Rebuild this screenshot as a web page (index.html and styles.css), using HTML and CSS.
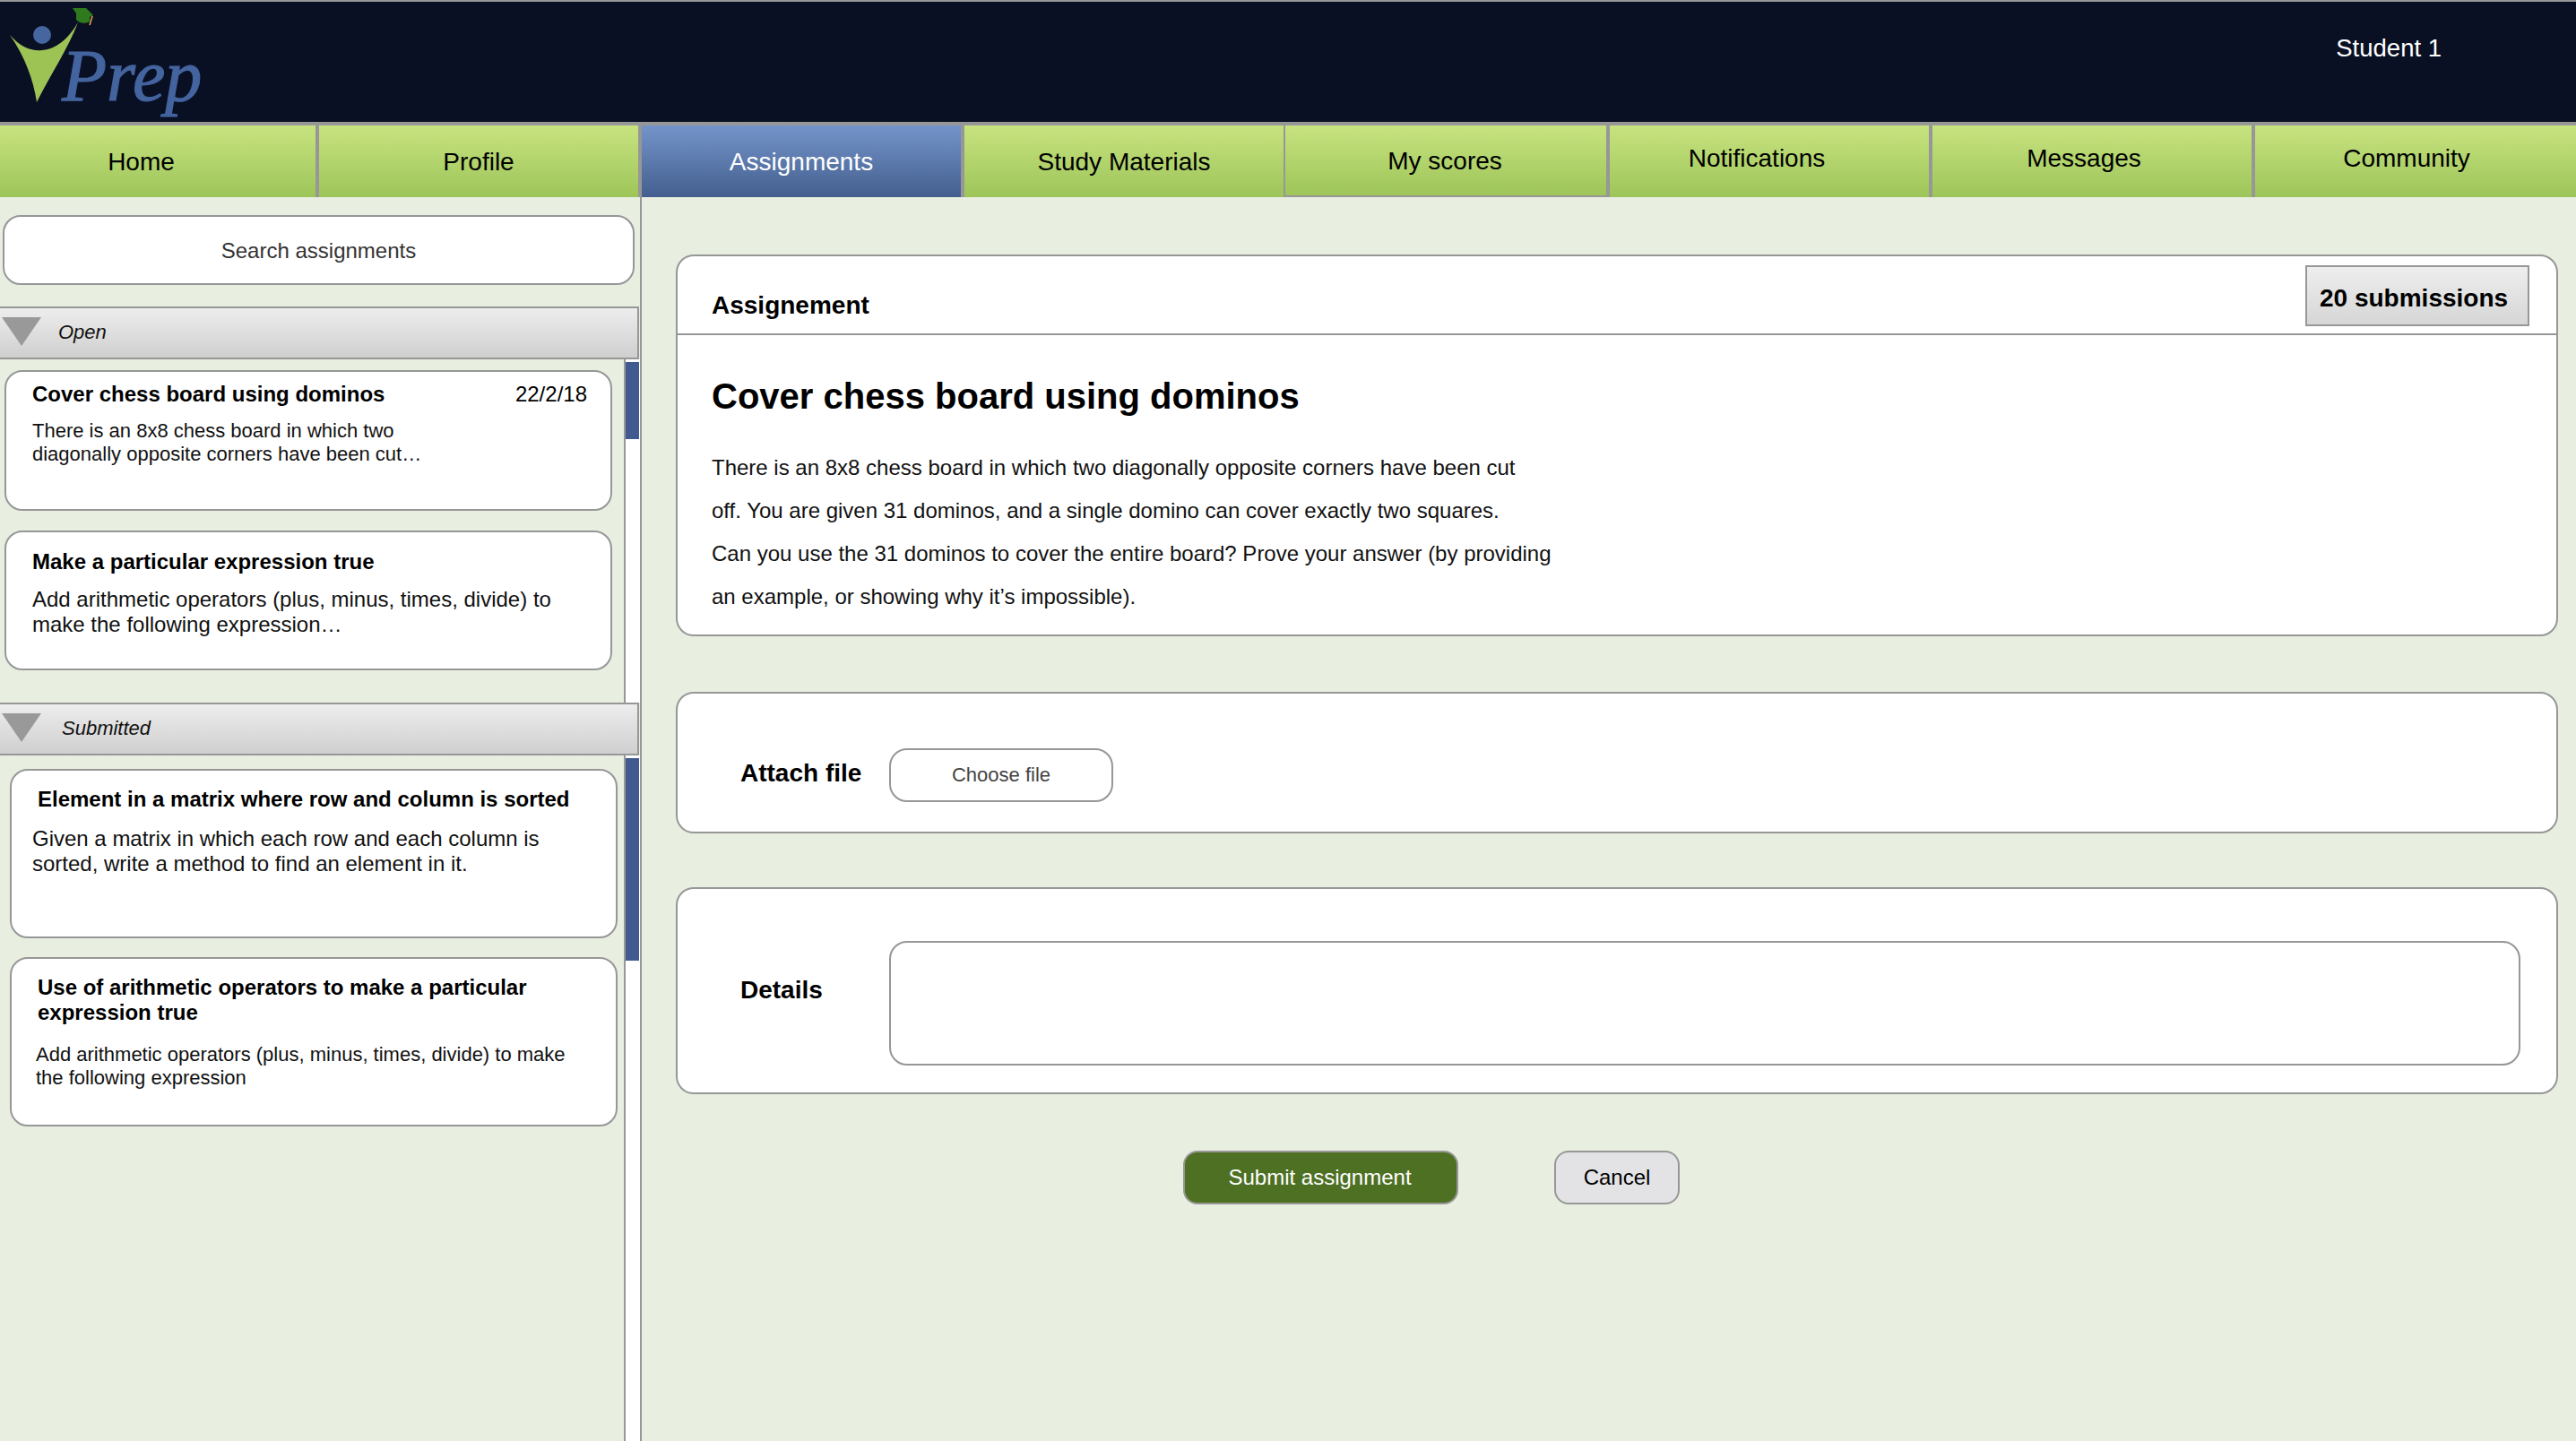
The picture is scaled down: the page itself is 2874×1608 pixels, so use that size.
FILE: index.html
```html
<!DOCTYPE html>
<html lang="en">
<head>
<meta charset="utf-8">
<title>Prep - Assignments</title>
<link rel="stylesheet" href="styles.css">
</head>
<body>
<header class="topbar">
  <svg class="logo" width="240" height="134" viewBox="0 0 240 134">
    <circle cx="47" cy="37" r="10" fill="#46669f"/>
    <path d="M11 37 C24 52 36 55 47 54 C62 53 76 42 87 23 C76 52 56 82 41 112 C37 86 28 62 11 37 Z" fill="#9cc354"/>
    <path d="M81 7 L96 7 L104 15 L100 17 L100 22 C95 25 88 24 85 20 L85 13 Z" fill="#2f7a1d"/>
    <path d="M103 16 L100 26" stroke="#e0a040" stroke-width="1.6" fill="none"/>
    <text class="logo-word" x="69" y="110">Prep</text>
  </svg>
  <div class="user">Student 1</div>
</header>
<nav class="tabs">
  <a class="tab tab-home">Home</a>
  <a class="tab">Profile</a>
  <a class="tab tab-active">Assignments</a>
  <a class="tab tab-study">Study Materials</a>
  <a class="tab tab-scores">My scores</a>
  <a class="tab tab-notif">Notifications</a>
  <a class="tab tab-msg">Messages</a>
  <a class="tab tab-comm">Community</a>
</nav>
<div class="layout">
  <aside class="sidebar">
    <div class="search">Search assignments</div>
    <section class="group group-open">
      <div class="group-head">
        <svg class="tri" width="44" height="32" viewBox="0 0 44 32"><path d="M0 0 H44 L22 32 Z" fill="#999"/></svg>
        <span class="group-title">Open</span>
      </div>
      <div class="group-body">
        <div class="cards cards-open">
          <article class="card card-a">
            <div class="card-top"><h3 class="card-title">Cover chess board using dominos</h3><span class="card-date">22/2/18</span></div>
            <p class="card-text text-s">There is an 8x8 chess board in which two<br>diagonally opposite corners have been cut…</p>
          </article>
          <article class="card card-b">
            <h3 class="card-title">Make a particular expression true</h3>
            <p class="card-text text-m">Add arithmetic operators (plus, minus, times, divide) to<br>make the following expression…</p>
          </article>
        </div>
        <div class="track"><div class="thumb thumb-open"></div></div>
      </div>
    </section>
    <section class="group group-sub">
      <div class="group-head">
        <svg class="tri" width="44" height="32" viewBox="0 0 44 32"><path d="M0 0 H44 L22 32 Z" fill="#999"/></svg>
        <span class="group-title title-sub">Submitted</span>
      </div>
      <div class="group-body">
        <div class="cards cards-sub">
          <article class="card card-c">
            <h3 class="card-title">Element in a matrix where row and column is sorted</h3>
            <p class="card-text text-m">Given a matrix in which each row and each column is<br>sorted, write a method to find an element in it.</p>
          </article>
          <article class="card card-d">
            <h3 class="card-title">Use of arithmetic operators to make a particular<br>expression true</h3>
            <p class="card-text text-s">Add arithmetic operators (plus, minus, times, divide) to make<br>the following expression</p>
          </article>
        </div>
        <div class="track"><div class="thumb thumb-sub"></div></div>
      </div>
    </section>
  </aside>
  <main class="main">
    <section class="panel panel-assign">
      <div class="panel-head">
        <h2 class="panel-label">Assignement</h2>
        <div class="subs">20 submissions</div>
      </div>
      <div class="panel-body">
        <h1 class="title">Cover chess board using dominos</h1>
        <p class="desc">There is an 8x8 chess board in which two diagonally opposite corners have been cut<br>off. You are given 31 dominos, and a single domino can cover exactly two squares.<br>Can you use the 31 dominos to cover the entire board? Prove your answer (by providing<br>an example, or showing why it’s impossible).</p>
      </div>
    </section>
    <section class="panel panel-attach">
      <div class="field-label">Attach file</div>
      <div class="choose">Choose file</div>
    </section>
    <section class="panel panel-details">
      <div class="field-label label-details">Details</div>
      <div class="details-box"></div>
    </section>
    <div class="actions">
      <div class="btn btn-submit">Submit assignment</div>
      <div class="btn btn-cancel">Cancel</div>
    </div>
  </main>
</div>
</body>
</html>
```
FILE: styles.css
```css
* { box-sizing: border-box; }
html, body { margin: 0; padding: 0; }
body {
  width: 2874px;
  height: 1608px;
  overflow: hidden;
  display: flex;
  flex-direction: column;
  background: #e8eee0;
  font-family: "Liberation Sans", Arial, sans-serif;
  color: #000;
}
h1, h2, h3, p { margin: 0; }

.topbar {
  height: 140px;
  flex: none;
  background: #0a1024;
  border-top: 2px solid #979797;
  border-bottom: 4px solid #979797;
  display: flex;
  justify-content: space-between;
}
.logo { display: block; flex: none; }
.logo-word {
  font-family: "Liberation Serif", serif;
  font-style: italic;
  font-size: 82px;
  stroke: #44649f;
  stroke-width: 1.2px;
  fill: #44649f;
}
.user {
  color: #fff;
  font-size: 27.5px;
  line-height: 32px;
  padding-top: 36px;
  margin-right: 150px;
}

.tabs {
  flex: none;
  height: 80px;
  display: grid;
  grid-template-columns: 356px 360px 360px 358px 362px 360px 360px 358px;
  border-bottom: 2px solid #979797;
}
.tab {
  display: flex;
  align-items: center;
  justify-content: center;
  font-size: 28px;
  padding-top: 2px;
  background: linear-gradient(#c8e380, #9dc559);
  border-right: 4px solid #979797;
}
.tab-home { padding-right: 37px; }
.tab-active { background: linear-gradient(#7494c9, #445f8f); color: #fff; }
.tab-study { border-right-width: 2px; }
.tab-scores { height: 80px; border-bottom: 2px solid #979797; padding-top: 2px; padding-right: 2px; }
.tab-notif { padding-right: 28px; padding-bottom: 7px; padding-top: 0; }
.tab-msg { padding-right: 18px; padding-bottom: 7px; padding-top: 0; }
.tab-comm { padding-right: 20px; padding-bottom: 7px; padding-top: 0; border-right: 0; }

.layout { flex: 1; display: flex; min-height: 0; }
.sidebar {
  width: 716px;
  flex: none;
  border-right: 2px solid #979797;
  display: flex;
  flex-direction: column;
  padding-top: 20px;
}
.search {
  margin: 0 6px 24px 3px;
  height: 78px;
  flex: none;
  background: #fff;
  border: 2px solid #979797;
  border-radius: 20px;
  display: flex;
  align-items: center;
  justify-content: center;
  font-size: 24px;
  color: #333;
  padding-top: 2px;
}
.group { display: flex; flex-direction: column; flex: none; }
.group-sub { flex: 1; min-height: 0; }
.group-head {
  height: 59px;
  flex: none;
  background: linear-gradient(#ededed, #cfcfcf);
  border: 2px solid #979797;
  border-left: 0;
  margin-right: 1px;
  display: flex;
  align-items: center;
}
.tri { margin: -3px 0 0 2px; flex: none; }
.group-title { font-size: 22px; font-style: italic; margin: -2px 0 0 19px; color: #111; }
.title-sub { margin-left: 23px; }
.group-body { display: flex; flex: 1; }
.group-open .group-body { flex: none; height: 383px; }
.cards { width: 696px; flex: none; display: flex; flex-direction: column; }
.cards-open { padding: 12px 13px 0 5px; gap: 22px; }
.cards-sub { padding: 15px 7px 0 11px; gap: 21px; }
.track {
  flex: 1;
  background: #fff;
  border-left: 2px solid #979797;
  padding-top: 3px;
}
.thumb { background: #415b91; width: 15px; margin-left: 0; }
.thumb-open { height: 86px; }
.thumb-sub { height: 226px; }

.card {
  background: #fff;
  border: 2px solid #979797;
  border-radius: 20px;
}
.card-a, .card-b { height: 157px; padding-left: 29px; }
.card-b { height: 156px; }
.card-c, .card-d { height: 189px; }
.card-a { padding-top: 11px; padding-right: 26px; }
.card-b { padding-top: 19px; }
.card-c { padding: 18px 0 0 23px; }
.card-d { padding: 18px 0 0 27px; }
.card-c .card-title { margin-left: 6px; }
.card-d .card-title { margin-left: 2px; }
.card-top { display: flex; justify-content: space-between; }
.card-title { font-size: 24px; line-height: 28px; font-weight: bold; }
.card-date { font-size: 24px; line-height: 28px; }
.card-text { color: #111; }
.text-s { font-size: 22px; line-height: 26px; }
.text-m { font-size: 24px; line-height: 28px; }
.card-a .card-text { margin-top: 14px; }
.card-b .card-text { margin-top: 14px; }
.card-c .card-text { margin-top: 16px; }
.card-d .card-text { margin-top: 20px; }

.main {
  flex: 1;
  min-width: 0;
  padding: 64px 20px 0 38px;
  display: flex;
  flex-direction: column;
}
.panel {
  background: #fff;
  border: 2px solid #979797;
  border-radius: 20px;
  flex: none;
}
.panel-assign { height: 426px; }
.panel-attach { height: 158px; margin-top: 62px; display: flex; align-items: center; padding: 24px 0 0 70px; }
.panel-details { height: 231px; margin-top: 60px; display: flex; padding: 58px 40px 0 70px; }
.panel-head {
  height: 88px;
  border-bottom: 2px solid #979797;
  display: flex;
  justify-content: space-between;
  padding: 10px 30px 0 38px;
}
.panel-label { font-size: 28px; line-height: 32px; font-weight: bold; padding-top: 29px; }
.subs {
  width: 250px;
  height: 68px;
  background: linear-gradient(#eee, #d6d6d6);
  border: 2px solid #979797;
  font-size: 28px;
  font-weight: bold;
  padding: 19px 0 0 14px;
  line-height: 32px;
}
.panel-body { padding: 45px 38px 0; }
.title { font-size: 40px; line-height: 46px; font-weight: bold; }
.desc { font-size: 24px; line-height: 48px; margin-top: 33px; color: #111; }
.field-label { width: 166px; flex: none; font-size: 28px; line-height: 32px; font-weight: bold; }
.label-details { margin-top: 39px; }
.choose {
  width: 250px;
  height: 60px;
  margin-top: 3px;
  border: 2px solid #979797;
  border-radius: 20px;
  display: flex;
  align-items: center;
  justify-content: center;
  font-size: 22px;
  color: #444;
}
.details-box {
  flex: 1;
  height: 139px;
  border: 2px solid #979797;
  border-radius: 20px;
}
.actions { display: flex; gap: 107px; margin-top: 63px; padding-left: 566px; }
.btn {
  height: 60px;
  border: 2px solid #979797;
  border-radius: 16px;
  display: flex;
  align-items: center;
  justify-content: center;
  font-size: 24px;
}
.btn-submit { width: 307px; background: #4e7023; color: #fff; padding-right: 2px; }
.btn-cancel { width: 140px; background: #e3e3e6; }
```
